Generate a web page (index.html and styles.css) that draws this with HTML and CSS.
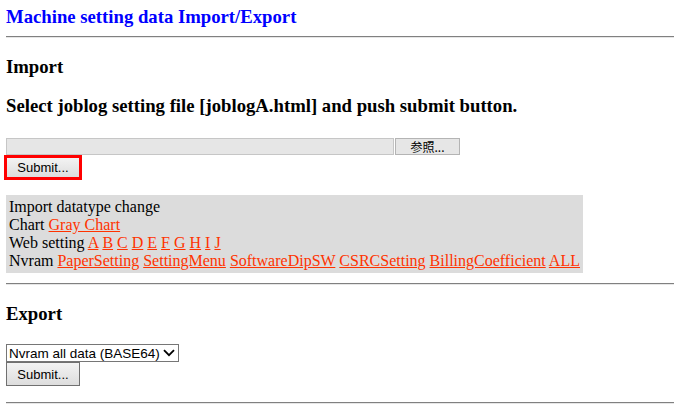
FILE: index.html
```html
<!DOCTYPE html>
<html>
<head>
<meta charset="utf-8">
<title>Machine setting data Import/Export</title>
<link rel="stylesheet" href="styles.css">
</head>
<body>
<div class="title">Machine setting data Import/Export</div>
<div class="rule rule-top"></div>
<div class="heading h-import">Import</div>
<div class="heading h-select">Select joblog setting file [joblogA.html] and push submit button.</div>
<div class="file-row">
  <div class="file-field"></div>
  <div class="file-btn">参照...</div>
</div>
<div class="btn btn-focused">Submit...</div>
<div class="datatype">
  <div class="line">Import datatype change</div>
  <div class="line">Chart <a href="#">Gray Chart</a></div>
  <div class="line">Web setting <a href="#">A</a> <a href="#">B</a> <a href="#">C</a> <a href="#">D</a> <a href="#">E</a> <a href="#">F</a> <a href="#">G</a> <a href="#">H</a> <a href="#">I</a> <a href="#">J</a></div>
  <div class="line">Nvram <a href="#">PaperSetting</a> <a href="#">SettingMenu</a> <a href="#">SoftwareDipSW</a> <a href="#">CSRCSetting</a> <a href="#">BillingCoefficient</a> <a href="#">ALL</a></div>
</div>
<div class="rule rule-mid"></div>
<div class="heading h-export">Export</div>
<div class="select">
  <span class="select-text">Nvram all data (BASE64)</span>
  <svg class="chev" width="12" height="8" viewBox="0 0 12 8"><path d="M1 1.2 L6 6.2 L11 1.2" fill="none" stroke="#000" stroke-width="1.8"/></svg>
</div>
<div class="btn btn-normal">Submit...</div>
<div class="rule rule-bottom"></div>
</body>
</html>
```
FILE: styles.css
```css
html, body {
  margin: 0;
  padding: 0;
  background: #fff;
}
body {
  padding-left: 6px;
  font-family: "Liberation Serif", "Times New Roman", serif;
  font-size: 16px;
  color: #000;
}
.title {
  margin-top: 6px;
  font-size: 18.72px;
  line-height: 21px;
  font-weight: bold;
  color: #0000ff;
}
.rule {
  height: 0;
  border-top: 1px solid #808080;
  border-bottom: 1px solid #e6e6e6;
}
.rule-top { margin-top: 9px; }
.rule-mid { margin-top: 10px; }
.rule-bottom { margin-top: 16px; }
.heading {
  font-size: 18.72px;
  line-height: 21px;
  font-weight: bold;
}
.h-import { margin-top: 18px; }
.h-select { margin-top: 18px; }
.h-export { margin-top: 18px; }
.file-row {
  margin-top: 22px;
  display: flex;
  height: 17px;
}
.file-field {
  width: 386px;
  height: 15px;
  background: #e6e6e6;
  border: 1px solid #c6c6c6;
}
.file-btn {
  width: 63px;
  height: 15px;
  margin-left: 1px;
  background: #e6e6e6;
  border: 1px solid #b4b4b4;
  font-family: "Noto Sans CJK JP", "Liberation Sans", sans-serif;
  font-size: 12px;
  line-height: 15px;
  text-align: center;
}
.btn {
  box-sizing: border-box;
  font-family: "Liberation Sans", Arial, sans-serif;
  font-size: 13px;
  color: #000;
  background: linear-gradient(#f3f3f3, #dddddd);
  display: flex;
  align-items: center;
  justify-content: center;
}
.btn-focused {
  width: 78px;
  height: 25px;
  margin-left: -2px;
  border: 3px solid #ff0000;
}
.btn-normal {
  width: 74px;
  height: 24px;
  border: 1px solid #707070;
}
.datatype {
  margin-top: 15px;
  width: fit-content;
  padding: 3px 3px 3px 3px;
  background: #dcdcdc;
}
.line {
  line-height: 18px;
  white-space: nowrap;
}
.datatype a {
  color: #ff3300;
  text-decoration: underline;
}
.select {
  margin-top: 20px;
  box-sizing: border-box;
  width: 173px;
  height: 18px;
  border: 1px solid #767676;
  display: flex;
  align-items: center;
  justify-content: space-between;
  padding: 0 3px 0 2px;
  font-family: "Liberation Sans", Arial, sans-serif;
  font-size: 13.5px;
}
.chev { flex: none; }
```
